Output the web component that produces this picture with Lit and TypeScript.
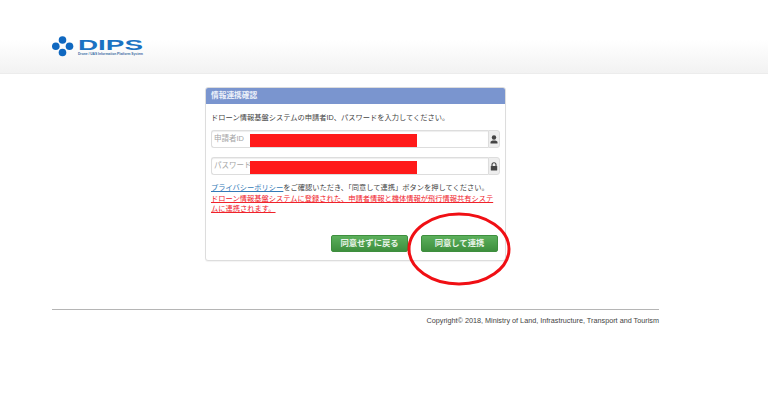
import { LitElement, html, css } from "lit";
import { customElement } from "lit/decorators.js";

@customElement("app-root")
export class AppRoot extends LitElement {
  static styles = css`
    :host { display: block; width: 768px; height: 400px; overflow: hidden; position: relative; background: #fff;
      font-family: "Liberation Sans", "Noto Sans CJK JP", sans-serif; color: #333; }
    header { height: 74px; box-sizing: border-box; padding: 36px 0 0 52px; background: linear-gradient(#fff 0, #fff 55%, #f2f2f2 100%); border-bottom: 1px solid #ececec; }
    .logo { display: block; overflow: visible; }
    .logo .mark { font-family: "Liberation Sans", sans-serif; font-weight: 700; font-size: 14px; fill: #1a72c2; }
    .logo .sub { font-family: "Liberation Sans", sans-serif; font-weight: 700; font-size: 3.6px; fill: #3a6ea5; }
    main { display: flex; padding: 13px 0 0 205px; }
    .panel { width: 301px; height: 174px; box-sizing: border-box; border: 1px solid #ddd; border-radius: 3px; display: flex; flex-direction: column; background: #fff; box-shadow: 0 1px 1px rgba(0,0,0,.05); }
    .head { height: 16px; flex: none; background: #7a95cf; color: #eef2fa; font-size: 7.7px; font-weight: 700; line-height: 15px; padding-left: 5px; border-radius: 2px 2px 0 0; }
    .body { flex: 1; padding: 8px 5px 8px 5px; display: flex; flex-direction: column; }
    .lead { font-size: 7.25px; line-height: 12px; color: #444; white-space: nowrap; }
    .group { display: flex; height: 18px; margin-top: 6px; position: relative; }
    .group + .group { margin-top: 9px; }
    .input { flex: 1; border: 1px solid #ddd; border-right: 0; border-radius: 3px 0 0 3px; font-size: 7.5px; color: #a5a5a5; line-height: 15px; padding-left: 2px; background: #fff; box-shadow: inset 0 1px 1px rgba(0,0,0,.07); }
    .addon { width: 10px; display: flex; align-items: center; justify-content: center; background: #eee; border: 1px solid #ddd; border-radius: 0 3px 3px 0; }
    .redact { position: absolute; left: 39px; top: 4px; width: 167px; height: 13px; background: #ff1a1a; }
    .note { margin-top: 8px; font-size: 7.25px; line-height: 10.6px; white-space: nowrap; color: #444; }
    .note a { color: #337ab7; text-decoration: underline; }
    .warn { color: #f0222a; text-decoration: underline; }
    .actions { margin-top: auto; display: flex; justify-content: flex-end; gap: 13px; padding-right: 2px; }
    .btn { width: 77px; height: 17px; border-radius: 2px; background: linear-gradient(#5cb05c, #3e8f3e); border: 1px solid #3e8f3e; box-sizing: border-box; color: #e9f4e9; font-size: 8.3px; font-weight: 700; line-height: 15px; text-align: center; }
    .foot { margin: 48px 109px 0 52px; border-top: 1px solid #b5b5b5; padding-top: 6px; text-align: right; font-size: 7.25px; line-height: 10px; color: #444; }
    .circle { position: absolute; left: 407px; top: 211px; }
  `;

  render() {
    return html`
      <header>
        <svg class="logo" width="92" height="24" viewBox="0 0 92 24" role="img" aria-label="DIPS">
          <g fill="#1068c0">
            <circle cx="10.500" cy="4" r="3.800"></circle>
            <circle cx="3.800" cy="10.300" r="3.800"></circle>
            <circle cx="17.500" cy="10.300" r="3.800"></circle>
            <circle cx="10.500" cy="16.500" r="3.800"></circle>
          </g>
          <text class="mark" x="26" y="14" textLength="65" lengthAdjust="spacingAndGlyphs">DIPS</text>
          <text class="sub" x="26" y="19" textLength="65" lengthAdjust="spacingAndGlyphs">Drone / UAS Information Platform System</text>
        </svg>
      </header>
      <main>
        <section class="panel">
          <div class="head">情報連携確認</div>
          <div class="body">
            <div class="lead">ドローン情報基盤システムの申請者ID、パスワードを入力してください。</div>
            <div class="group">
              <div class="input">申請者ID</div>
              <div class="addon"><svg width="8" height="9" viewBox="0 0 8 9"><circle cx="4" cy="2.500" r="2.200" fill="#444"></circle><path d="M.5 8.500V7c0-1 1.500-1.600 3.500-1.600S7.500 6 7.500 7v1.500z" fill="#444"></path></svg></div>
              <div class="redact"></div>
            </div>
            <div class="group">
              <div class="input">パスワード</div>
              <div class="addon"><svg width="8" height="9" viewBox="0 0 8 9"><path d="M2 4V2.800a2 2 0 0 1 4 0V4" fill="none" stroke="#444" stroke-width="1.100"></path><rect x=".8" y="4" width="6.400" height="4.600" rx=".6" fill="#444"></rect></svg></div>
              <div class="redact"></div>
            </div>
            <div class="note">
              <div><a>プライバシーポリシー</a>をご確認いただき、「同意して連携」ボタンを押してください。</div>
              <div class="warn">ドローン情報基盤システムに登録された、申請者情報と機体情報が飛行情報共有システ</div>
              <div class="warn">ムに連携されます。</div>
            </div>
            <div class="actions">
              <div class="btn">同意せずに戻る</div>
              <div class="btn">同意して連携</div>
            </div>
          </div>
        </section>
      </main>
      <footer class="foot">Copyright© 2018, Ministry of Land, Infrastructure, Transport and Tourism</footer>
      <svg class="circle" width="106" height="76" viewBox="0 0 106 76"><ellipse cx="52" cy="38" rx="50" ry="35" fill="none" stroke="#f00f14" stroke-width="3"></ellipse></svg>
    `;
  }
}
